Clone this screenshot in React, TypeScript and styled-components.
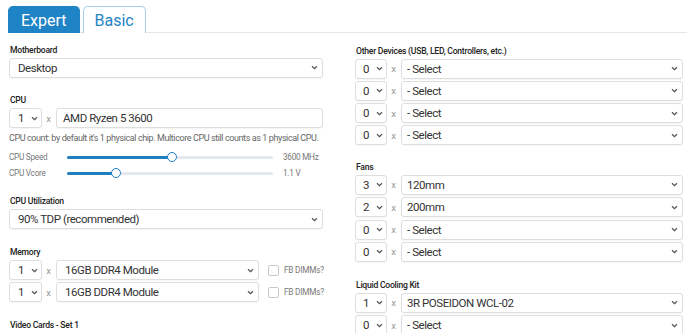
import React from "react";
import styled, { createGlobalStyle } from "styled-components";

const Global = createGlobalStyle`
  html, body { margin: 0; padding: 0; background: #fff; }
  body { font-family: Roboto, "Liberation Sans", Arial, sans-serif; color: #333; }
  * { box-sizing: border-box; }
`;

const Page = styled.div`
  width: 699px;
  height: 333px;
  overflow: hidden;
  padding-top: 6px;
`;

const TabBar = styled.div`
  display: flex;
  gap: 3px;
  margin-left: 8px;
  width: 679px;
  height: 27px;
  border-bottom: 1px solid #e6e6e6;
`;

const Tab = styled.div<{ $active?: boolean }>`
  height: 27px;
  padding: 0 ${(p) => (p.$active ? 12 : 11)}px;
  display: flex;
  align-items: center;
  font-size: 16px;
  border-radius: 5px 5px 0 0;
  background: ${(p) => (p.$active ? "#1f84c6" : "#fff")};
  color: ${(p) => (p.$active ? "#fff" : "#1f84c6")};
  border: 1px solid ${(p) => (p.$active ? "#1f84c6" : "#a8cfea")};
  border-bottom: none;
`;

const Columns = styled.div`
  display: grid;
  grid-template-columns: 314px 328px;
  column-gap: 32px;
  padding-left: 9px;
`;

const Column = styled.div<{ $top: number }>`
  display: flex;
  flex-direction: column;
  padding-top: ${(p) => p.$top}px;
`;

const Group = styled.div<{ $mt?: number }>`
  display: flex;
  flex-direction: column;
  margin-top: ${(p) => p.$mt ?? 0}px;
`;

const Label = styled.div`
  font-size: 8.6px;
  letter-spacing: -0.25px;
  line-height: 10px;
  height: 10px;
  font-weight: 500;
  color: #222;
  margin-bottom: 3px;
  padding-left: 1px;
  white-space: nowrap;
`;

const Rows = styled.div<{ $gap: number }>`
  display: flex;
  flex-direction: column;
  gap: ${(p) => p.$gap}px;
`;

const Row = styled.div`
  display: flex;
  align-items: center;
  height: 20px;
`;

const Box = styled.div<{ $w?: number; $pl?: number; $pr?: number }>`
  height: 20px;
  flex: ${(p) => (p.$w ? "none" : "1 1 auto")};
  width: ${(p) => (p.$w ? `${p.$w}px` : "auto")};
  min-width: 0;
  border: 1px solid #dedede;
  border-radius: 3px;
  box-shadow: 0 1px 1px rgba(0, 0, 0, 0.04);
  display: flex;
  align-items: center;
  padding-left: ${(p) => p.$pl ?? 7}px;
  padding-right: ${(p) => p.$pr ?? 4}px;
  font-size: 11.5px;
  letter-spacing: -0.45px;
  color: #333;
  background: #fff;
  white-space: nowrap;
`;

const BoxText = styled.span`
  flex: 1;
`;

const Times = styled.div`
  width: 14px;
  flex: none;
  text-align: center;
  font-size: 9.5px;
  color: #999;
  padding-right: 1px;
`;

const Help = styled.div`
  font-size: 9px;
  letter-spacing: -0.4px;
  line-height: 14px;
  color: #666;
  margin-top: 3px;
  white-space: nowrap;
`;

const Sliders = styled.div`
  display: flex;
  flex-direction: column;
  margin-top: 4px;
`;

const SliderRow = styled.div`
  display: grid;
  grid-template-columns: 58px 206px auto;
  align-items: center;
  height: 16px;
  font-size: 8.2px;
  letter-spacing: -0.25px;
  color: #777;
  white-space: nowrap;
`;

const SliderValue = styled.span`
  padding-left: 10px;
`;

const Track = styled.div`
  position: relative;
  height: 3px;
  border-radius: 2px;
  background: #e4e9f0;
`;

const Fill = styled.div`
  height: 3px;
  border-radius: 2px;
  background: #1f7fc0;
`;

const Thumb = styled.div`
  position: absolute;
  top: 50%;
  width: 10px;
  height: 10px;
  margin: -5px 0 0 -5px;
  border-radius: 50%;
  border: 1.5px solid #1f7fc0;
  background: #fff;
`;

const Check = styled.div`
  width: 11px;
  height: 11px;
  flex: none;
  border: 1px solid #c9c9c9;
  border-radius: 2px;
  margin-left: 9px;
  margin-right: 5px;
`;

const CheckLabel = styled.span`
  font-size: 8.2px;
  letter-spacing: -0.2px;
  color: #777;
  white-space: nowrap;
`;

const Chevron = () => (
  <svg width="7" height="5" viewBox="0 0 7 5" style={{ flex: "none" }}>
    <path d="M1 1.2 L3.5 3.6 L6 1.2" fill="none" stroke="#555" strokeWidth="1.3" />
  </svg>
);

const Select = ({ children, w, pl, pr }: { children: React.ReactNode; w?: number; pl?: number; pr?: number }) => (
  <Box $w={w} $pl={pl} $pr={pr}>
    <BoxText>{children}</BoxText>
    <Chevron />
  </Box>
);

const QtyRow = ({ qty, value }: { qty: string; value: string }) => (
  <Row>
    <Select w={32} pl={7} pr={3}>{qty}</Select>
    <Times>x</Times>
    <Select pl={5}>{value}</Select>
  </Row>
);

const Slider = ({ label, pct, value }: { label: string; pct: number; value: string }) => (
  <SliderRow>
    <span>{label}</span>
    <Track>
      <Fill style={{ width: `${pct}%` }} />
      <Thumb style={{ left: `${pct}%` }} />
    </Track>
    <SliderValue>{value}</SliderValue>
  </SliderRow>
);

export default function App() {
  return (
    <Page>
      <Global />
      <TabBar>
        <Tab $active>Expert</Tab>
        <Tab>Basic</Tab>
      </TabBar>
      <Columns>
        <Column $top={11.5}>
          <Group>
            <Label>Motherboard</Label>
            <Select pl={8}>Desktop</Select>
          </Group>
          <Group $mt={17.5}>
            <Label>CPU</Label>
            <Row>
              <Select w={33} pl={8} pr={3}>1</Select>
              <Times>x</Times>
              <Box $pl={6}>AMD Ryzen 5 3600</Box>
            </Row>
            <Help>CPU count: by default it's 1 physical chip. Multicore CPU still counts as 1 physical CPU.</Help>
            <Sliders>
              <Slider label="CPU Speed" pct={51} value="3600 MHz" />
              <Slider label="CPU Vcore" pct={24} value="1.1 V" />
            </Sliders>
          </Group>
          <Group $mt={15}>
            <Label>CPU Utilization</Label>
            <Select pl={8}>90% TDP (recommended)</Select>
          </Group>
          <Group $mt={18}>
            <Label>Memory</Label>
            <Rows $gap={2}>
              {[0, 1].map((i) => (
                <Row key={i}>
                  <Select w={33} pl={8} pr={3}>1</Select>
                  <Times>x</Times>
                  <Box $w={203} $pl={8}>
                    <BoxText>16GB DDR4 Module</BoxText>
                    <Chevron />
                  </Box>
                  <Check />
                  <CheckLabel>FB DIMMs?</CheckLabel>
                </Row>
              ))}
            </Rows>
          </Group>
          <Group $mt={18}>
            <Label>Video Cards - Set 1</Label>
          </Group>
        </Column>
        <Column $top={12.5}>
          <Group>
            <Label>Other Devices (USB, LED, Controllers, etc.)</Label>
            <Rows $gap={2.3}>
              <QtyRow qty="0" value="- Select" />
              <QtyRow qty="0" value="- Select" />
              <QtyRow qty="0" value="- Select" />
              <QtyRow qty="0" value="- Select" />
            </Rows>
          </Group>
          <Group $mt={16.6}>
            <Label>Fans</Label>
            <Rows $gap={2.3}>
              <QtyRow qty="3" value="120mm" />
              <QtyRow qty="2" value="200mm" />
              <QtyRow qty="0" value="- Select" />
              <QtyRow qty="0" value="- Select" />
            </Rows>
          </Group>
          <Group $mt={18}>
            <Label>Liquid Cooling Kit</Label>
            <Rows $gap={2.5}>
              <QtyRow qty="1" value="3R POSEIDON WCL-02" />
              <QtyRow qty="0" value="- Select" />
            </Rows>
          </Group>
        </Column>
      </Columns>
    </Page>
  );
}
